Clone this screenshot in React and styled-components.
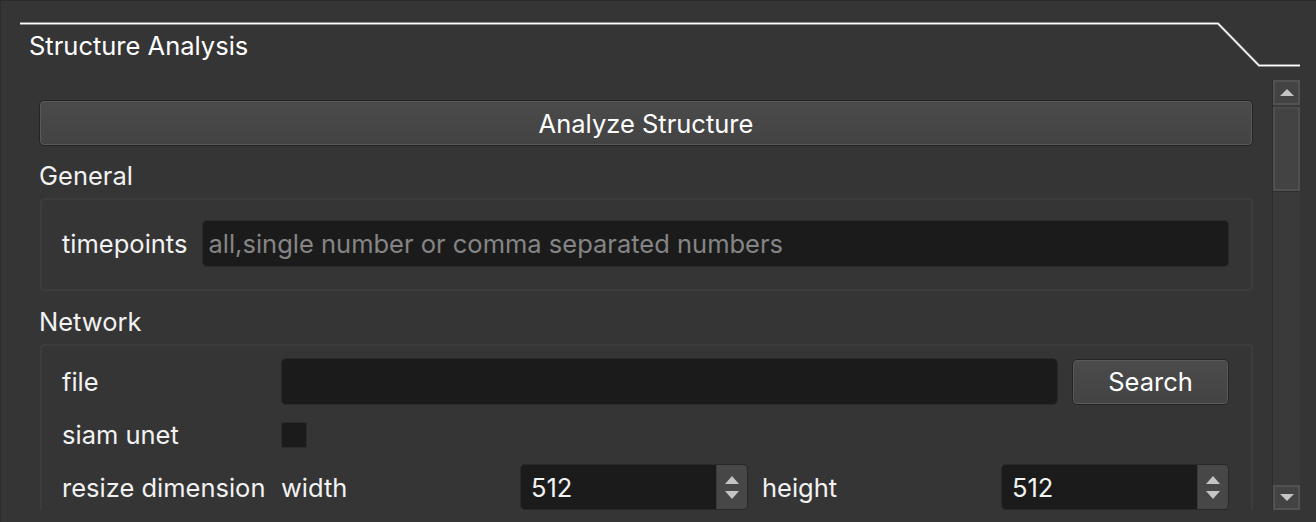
import styled, { createGlobalStyle } from "styled-components";

const GlobalStyle = createGlobalStyle`
  html, body {
    margin: 0;
    padding: 0;
    background: #353535;
  }
  body {
    font-family: Inter, "Noto Sans", "Liberation Sans", sans-serif;
    color: #f2f2f2;
  }
`;

const TEXT = "25.5px";

export default function App() {
  return (
    <>
      <GlobalStyle />
      <Window>
        <Header>
          <TabLine viewBox="0 0 1316 80" width="1316" height="80">
            <polyline
              points="20,23.5 1218,23.5 1259,65.5 1300,65.5"
              fill="none"
              stroke="#6a6a6a"
              strokeWidth="3"
            />
            <polyline
              points="20,23.5 1218,23.5 1259,65.5 1300,65.5"
              fill="none"
              stroke="#ffffff"
              strokeWidth="1.6"
            />
          </TabLine>
          <Title>Structure Analysis</Title>
        </Header>
        <Body>
          <Viewport>
            <BigButton>Analyze Structure</BigButton>
            <SectionLabel $mt={16}>General</SectionLabel>
            <GroupBox $pt={20} $pb={22}>
              <InlineRow>
                <Label>timepoints</Label>
                <TextInput placeholder="all,single number or comma separated numbers" />
              </InlineRow>
            </GroupBox>
            <SectionLabel $mt={17}>Network</SectionLabel>
            <GroupBox $pt={12} $pb={12}>
              <FormRow $h={47}>
                <FormLabel>file</FormLabel>
                <Field>
                  <TextInput />
                  <SmallButton>Search</SmallButton>
                </Field>
              </FormRow>
              <FormRow $h={26} $mt={14}>
                <FormLabel>siam unet</FormLabel>
                <Field>
                  <CheckBox />
                </Field>
              </FormRow>
              <FormRow $h={46} $mt={19}>
                <FormLabel>resize dimension</FormLabel>
                <Field>
                  <SubLabel>width</SubLabel>
                  <SpinBox value="512" />
                  <SubLabel>height</SubLabel>
                  <SpinBox value="512" />
                </Field>
              </FormRow>
            </GroupBox>
          </Viewport>
          <ScrollBar>
            <ScrollArrow>
              <Triangle $dir="up" />
            </ScrollArrow>
            <Handle />
            <Track />
            <ScrollArrow>
              <Triangle $dir="down" />
            </ScrollArrow>
          </ScrollBar>
        </Body>
      </Window>
    </>
  );
}

function SpinBox({ value }) {
  return (
    <Spin>
      <SpinValue>{value}</SpinValue>
      <Stepper>
        <Triangle $dir="up" $size={15} />
        <Triangle $dir="down" $size={15} />
      </Stepper>
    </Spin>
  );
}

const Window = styled.div`
  width: 1316px;
  height: 522px;
  box-sizing: border-box;
  overflow: hidden;
  background: #353535;
  border-left: 1px solid #2b2b2b;
  border-top: 1px solid #2b2b2b;
`;

const Header = styled.div`
  position: relative;
  height: 79px;
`;

const TabLine = styled.svg`
  position: absolute;
  left: -1px;
  top: -1px;
`;

const Title = styled.div`
  position: relative;
  padding: 30px 0 0 28px;
  font-size: ${TEXT};
  line-height: 30px;
  color: #ffffff;
`;

const Body = styled.div`
  display: flex;
  padding-left: 19px;
`;

const Viewport = styled.div`
  width: 1253px;
  height: 430px;
  flex: none;
  box-sizing: border-box;
  overflow: hidden;
  padding: 20px 19px 0 19px;
  border-right: 1px solid #2d2d2d;
`;

const BigButton = styled.div`
  height: 46px;
  box-sizing: border-box;
  display: flex;
  align-items: center;
  justify-content: center;
  border: 1px solid #242424;
  border-radius: 5px;
  box-shadow: inset 0 0 0 1px #595959;
  background: linear-gradient(#4b4b4b, #434343);
  font-size: ${TEXT};
  color: #ffffff;
`;

const SmallButton = styled(BigButton)`
  width: 157px;
  height: 46px;
  flex: none;
`;

const SectionLabel = styled.div`
  margin-top: ${({ $mt }) => $mt}px;
  margin-bottom: 8px;
  font-size: ${TEXT};
  line-height: 28px;
`;

const GroupBox = styled.div`
  box-sizing: border-box;
  margin-left: 1px;
  border: 2px solid #3c3c3c;
  border-radius: 4px;
  padding: ${({ $pt }) => $pt}px 22px ${({ $pb }) => $pb}px 20px;
`;

const InlineRow = styled.div`
  display: flex;
  align-items: center;
  gap: 15px;
  height: 47px;
`;

const Label = styled.span`
  font-size: ${TEXT};
  flex: none;
`;

const TextInput = styled.input`
  flex: 1;
  height: 47px;
  min-width: 0;
  box-sizing: border-box;
  background: #1b1b1b;
  border: 1px solid #2a2a2a;
  border-radius: 5px;
  padding: 0 5px;
  font-family: inherit;
  font-size: ${TEXT};
  color: #f2f2f2;
  outline: none;
  &::placeholder {
    color: #858585;
  }
`;

const FormRow = styled.div`
  display: grid;
  grid-template-columns: 219px 1fr;
  align-items: center;
  height: ${({ $h }) => $h}px;
  margin-top: ${({ $mt }) => $mt || 0}px;
`;

const FormLabel = styled.span`
  font-size: ${TEXT};
  white-space: nowrap;
`;

const Field = styled.div`
  display: flex;
  align-items: center;
  gap: 14px;
  height: 100%;
`;

const SubLabel = styled.span`
  width: 225px;
  flex: none;
  font-size: ${TEXT};
`;

const CheckBox = styled.div`
  width: 26px;
  height: 26px;
  box-sizing: border-box;
  background: #1b1b1b;
  border: 1px solid #2b2b2b;
  border-radius: 2px;
`;

const Spin = styled.div`
  flex: 1;
  display: flex;
  height: 46px;
  box-sizing: border-box;
  border: 1px solid #292929;
  border-radius: 5px;
  overflow: hidden;
  background: #1b1b1b;
`;

const SpinValue = styled.div`
  flex: 1;
  display: flex;
  align-items: center;
  padding-left: 10px;
  font-size: ${TEXT};
`;

const Stepper = styled.div`
  width: 30px;
  display: flex;
  flex-direction: column;
  align-items: center;
  justify-content: center;
  gap: 7px;
  background: #474747;
  border-left: 1px solid #3a3a3a;
`;

const Triangle = styled.div`
  width: 0;
  height: 0;
  border-left: ${({ $size }) => ($size || 14) / 2}px solid transparent;
  border-right: ${({ $size }) => ($size || 14) / 2}px solid transparent;
  ${({ $dir, $size }) =>
    $dir === "up"
      ? `border-bottom: ${Math.round(($size || 14) * 0.5)}px solid #c4c4c4;`
      : `border-top: ${Math.round(($size || 14) * 0.5)}px solid #c4c4c4;`}
`;

const ScrollBar = styled.div`
  width: 27px;
  height: 430px;
  flex: none;
  display: flex;
  flex-direction: column;
  background: #3a3a3a;
`;

const ScrollArrow = styled.div`
  height: 25px;
  flex: none;
  box-sizing: border-box;
  display: flex;
  align-items: center;
  justify-content: center;
  background: #434343;
  border: 2px solid #525252;
`;

const Handle = styled.div`
  height: 84px;
  flex: none;
  margin-top: 2px;
  box-sizing: border-box;
  background: #434343;
  border: 2px solid #505050;
  border-top-color: #4a4a4a;
`;

const Track = styled.div`
  flex: 1;
  margin-bottom: 2px;
  border-top: 1px solid #2e2e2e;
`;
